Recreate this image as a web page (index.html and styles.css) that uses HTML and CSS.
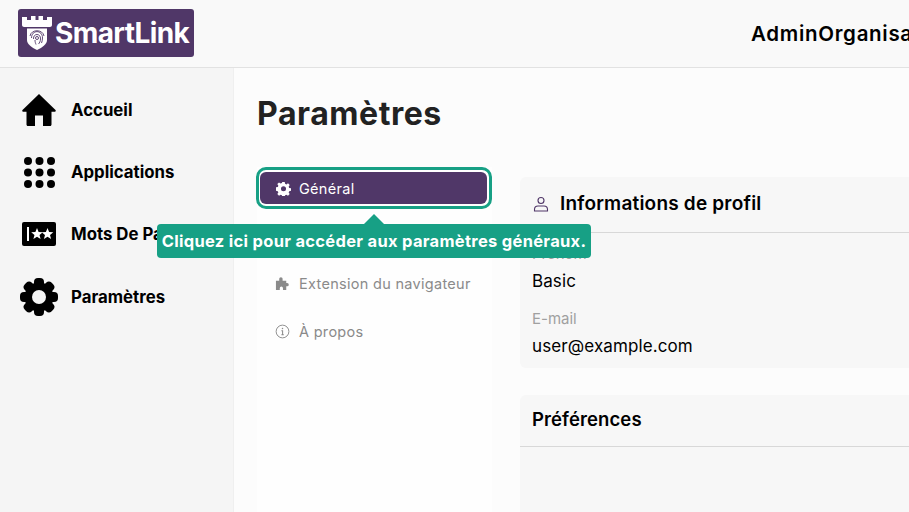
FILE: index.html
```html
<!DOCTYPE html>
<html lang="fr">
<head>
<meta charset="utf-8">
<title>SmartLink - Paramètres</title>
<link rel="stylesheet" href="styles.css">
</head>
<body>
<header class="topbar">
  <div class="logo">
    <svg class="logo-mark" viewBox="0 0 30 34" aria-hidden="true">
      <path fill="#fff" d="M0 1h5v3h4V0h4.500v4h3V0H21v4h4V1h5v8c0 1-1 2-2 2H2c-1 0-2-1-2-2z"/>
      <path fill="#fff" d="M5 12.500h20V24c0 4-4.500 7.500-10 10C9.500 31.500 5 28 5 24z"/>
      <g fill="none" stroke="#503768" stroke-width=".9">
        <circle cx="15" cy="22" r="1.500"/>
        <path d="M11.500 23c-.5-6 7.500-6 7 0 0 2-1 4-2 5M9.500 22c0-8.500 11-8.500 11 0 0 2-.5 3.500-1 5M13 24c0 2 .5 3 1 4.500M8 20c1-7 13-7 14 0"/>
      </g>
    </svg>
    <span class="logo-text">SmartLink</span>
  </div>
  <div class="account">AdminOrganisation</div>
</header>
<div class="shell">
  <nav class="sidebar">
    <a class="side-item">
      <svg class="side-icon" viewBox="0 0 34 34" aria-hidden="true"><path d="M17 1 .5 17c-.6.8 0 1.700 1 1.700h3V31.500c0 .8.600 1.500 1.300 1.500H13V22.500h8V33h7.200c.7 0 1.300-.7 1.300-1.500V18.700h3c1 0 1.600-.9 1-1.700z"/></svg>
      <span>Accueil</span>
    </a>
    <a class="side-item">
      <svg class="side-icon" viewBox="0 0 34 34" aria-hidden="true"><circle cx="6" cy="6" r="4"/><circle cx="17.500" cy="6" r="4"/><circle cx="29" cy="6" r="4"/><circle cx="6" cy="17.500" r="4"/><circle cx="17.500" cy="17.500" r="4"/><circle cx="29" cy="17.500" r="4"/><circle cx="6" cy="29" r="4"/><circle cx="17.500" cy="29" r="4"/><circle cx="29" cy="29" r="4"/></svg>
      <span>Applications</span>
    </a>
    <a class="side-item">
      <svg class="side-icon" viewBox="0 0 34 34" aria-hidden="true"><rect x="0" y="5" width="34" height="24" rx="2"/><rect x="5" y="10" width="2" height="14" fill="#fff"/><path fill="#fff" d="m15 11 1.600 4 4.200.2-3.300 2.700 1.100 4.100-3.600-2.300-3.600 2.300 1.100-4.100-3.300-2.700 4.200-.2zM25.500 11l1.600 4 4.200.2-3.300 2.700 1.100 4.100-3.600-2.300-3.600 2.300 1.100-4.100-3.300-2.700 4.200-.2z"/></svg>
      <span>Mots De Passe</span>
    </a>
    <a class="side-item">
      <svg class="side-icon gear" viewBox="0 0 38 38" aria-hidden="true"><circle cx="19" cy="19" r="14.500"/><rect x="14" y="0" width="10" height="38" rx="4"/><rect x="14" y="0" width="10" height="38" rx="4" transform="rotate(45 19 19)"/><rect x="14" y="0" width="10" height="38" rx="4" transform="rotate(90 19 19)"/><rect x="14" y="0" width="10" height="38" rx="4" transform="rotate(135 19 19)"/><circle class="gear-hole" cx="19" cy="19" r="7"/></svg>
      <span>Paramètres</span>
    </a>
  </nav>
  <main class="content">
    <h1 class="page-title">Paramètres</h1>
    <div class="columns">
      <div class="settings-nav">
        <div class="nav-highlight">
          <a class="nav-item active">
            <svg class="nav-icon" viewBox="0 0 16 16" aria-hidden="true"><path fill="#fff" fill-rule="evenodd" d="M6.700 1h2.600l.4 2 1.400.6 1.700-1.100 1.800 1.800-1.100 1.700.6 1.400 2 .4v2.600l-2 .4-.6 1.400 1.100 1.700-1.800 1.800-1.700-1.100-1.400.6-.4 2H6.700l-.4-2-1.400-.6-1.700 1.100-1.800-1.800 1.100-1.700-.6-1.400-2-.4V6.800l2-.4.6-1.400-1.100-1.700 1.800-1.800 1.700 1.100 1.400-.6zM8 5.500a2.700 2.700 0 1 0 0 5.400 2.700 2.700 0 0 0 0-5.400z"/></svg>
            <span>Général</span>
          </a>
        </div>
        <a class="nav-item">
          <svg class="nav-icon" viewBox="0 0 16 16" aria-hidden="true"><path fill="#8a8a8a" d="M1 5h3.500V3a1.800 1.800 0 0 1 3.600 0v2H12v2.500h1a1.700 1.700 0 0 1 0 3.400h-1V15H8.500v-2a1.700 1.700 0 0 0-3.400 0v2H1z"/></svg>
          <span>Extension du navigateur</span>
        </a>
        <a class="nav-item">
          <svg class="nav-icon" viewBox="0 0 16 16" aria-hidden="true"><circle cx="8" cy="8" r="6.800" fill="none" stroke="#8a8a8a" stroke-width="1"/><circle cx="8" cy="4.800" r=".8" fill="#8a8a8a"/><path fill="none" stroke="#8a8a8a" stroke-width="1.100" d="M6.800 7.300h1.300v4M6.800 11.500h2.600"/></svg>
          <span>À propos</span>
        </a>
      </div>
      <div class="cards">
        <section class="card profile">
          <h2 class="card-head">
            <svg class="user-icon" viewBox="0 0 16 16" aria-hidden="true"><circle cx="8" cy="4.500" r="3" fill="none" stroke="#503768" stroke-width="1.100"/><path fill="none" stroke="#503768" stroke-width="1.100" d="M1.500 15v-1.500c0-2 1.500-3.500 3.500-3.500h6c2 0 3.500 1.500 3.500 3.500V15z"/></svg>
            Informations de profil
          </h2>
          <div class="card-body">
            <div class="field"><div class="label">Prénom</div><div class="value">Basic</div></div>
            <div class="field"><div class="label">E-mail</div><div class="value">user@example.com</div></div>
          </div>
        </section>
        <section class="card second">
          <h2 class="card-head">Préférences</h2>
        </section>
      </div>
    </div>
  </main>
</div>
<div class="tooltip">
  Cliquez ici pour accéder aux paramètres généraux.
</div>
</body>
</html>
```

FILE: styles.css
```css
* { box-sizing: border-box; }
html, body { margin: 0; height: 100%; overflow: hidden; }
body {
  width: 909px;
  height: 512px;
  font-family: "Inter", "Noto Sans", sans-serif;
  color: #000;
  background: #fcfcfc;
  position: relative;
  overflow: hidden;
}
.topbar {
  height: 68px;
  display: flex;
  align-items: flex-start;
  background: #f9f9f9;
  border-bottom: 1px solid #e2e2e2;
  padding: 9px 0 0 18px;
  white-space: nowrap;
  overflow: hidden;
}
.logo {
  width: 176px;
  height: 48px;
  background: #503768;
  border-radius: 3px;
  display: flex;
  align-items: center;
  gap: 3px;
  padding-left: 4px;
  flex: none;
}
.logo-mark { width: 30px; height: 34px; flex: none; }
.logo-text {
  font-size: 28px;
  font-weight: 700;
  color: #fff;
  letter-spacing: -.6px;
}
.account {
  margin-left: 557px;
  margin-top: 12px;
  font-size: 20.500px;
  font-weight: 600;
  letter-spacing: .7px;
}
.shell { display: flex; height: 444px; overflow: hidden; }
.sidebar {
  width: 234px;
  flex: none;
  background: #f5f5f5;
  border-right: 1px solid #efefef;
  padding-top: 24px;
  display: flex;
  flex-direction: column;
  gap: 26px;
}
.side-item {
  display: flex;
  align-items: center;
  height: 36px;
  padding-left: 22px;
  gap: 15px;
  font-size: 16.800px;
  font-weight: 700;
  white-space: nowrap;
  overflow: hidden;
}
.side-item:last-child { height: 38px; }
.side-icon { width: 34px; height: 34px; flex: none; }
.gear { width: 38px; height: 38px; margin: 0 -2px; }
.gear-hole { fill: #f5f5f5; }
.content { flex: 1; padding: 0 0 0 23px; min-width: 0; overflow: hidden; }
.page-title {
  margin: 27px 0 0;
  font-size: 32px;
  line-height: 38px;
  font-weight: 700;
  letter-spacing: .55px;
  color: #222;
}
.columns { display: flex; gap: 28px; margin-top: 34px; height: 345px; padding-left: 1px; margin-left: -1px; }
.settings-nav {
  width: 235px;
  height: 345px;
  flex: none;
  background: #fefefe;
  display: flex;
  flex-direction: column;
}
.nav-highlight {
  margin: 0 0 0 -1px;
  width: 236px;
  height: 42px;
  flex: none;
  border: 3px solid #17a085;
  border-radius: 10px;
  background: #fff;
  padding: 2px 2px 0 1px;
}
.nav-item {
  display: flex;
  align-items: center;
  flex: none;
  height: 32px;
  padding-left: 18px;
  margin-top: 16px;
  gap: 9px;
  font-size: 14.500px;
  color: #8a8a8a;
  white-space: nowrap;
  letter-spacing: .3px;
}
.nav-highlight + .nav-item { margin-top: 58px; }
.nav-item.active {
  margin-top: 0;
  width: 100%;
  padding-left: 16px;
  gap: 8px;
  background: #503768;
  color: #fff;
  border-radius: 6px;
}
.nav-icon { width: 15px; height: 15px; flex: none; }
.cards { flex: 1; min-width: 0; display: flex; flex-direction: column; gap: 27px; margin-top: 10px; }
.card { background: #f7f7f7; border-radius: 6px 0 0 6px; width: 420px; flex: none; }
.profile { height: 191px; }
.card-head {
  margin: 0;
  height: 56px;
  display: flex;
  align-items: center;
  gap: 11px;
  padding: 0 0 2px 13px;
  font-size: 19px;
  letter-spacing: .2px;
  font-weight: 600;
  border-bottom: 1px solid #d8d8d8;
}
.second .card-head {
  height: 52px;
  padding: 0 0 4px 12px;
  font-size: 18.500px;
  letter-spacing: .1px;
}
.user-icon { width: 16px; height: 16px; flex: none; }
.card-body { padding: 11px 12px 0; }
.field + .field { margin-top: 17px; }
.label { font-size: 15px; line-height: 20px; color: #a0a0a0; }
.value { font-size: 17px; line-height: 22px; margin-top: 6px; letter-spacing: .1px; }
.second { height: 130px; }
.tooltip {
  position: absolute;
  left: 157px;
  top: 224px;
  width: 434px;
  height: 34px;
  background: #17a085;
  border-radius: 4px;
  color: #fff;
  font-size: 16.500px;
  letter-spacing: .3px;
  font-weight: 700;
  line-height: 34px;
  text-align: center;
  white-space: nowrap;
}
.tooltip::before {
  content: "";
  position: absolute;
  left: 207px;
  top: -10px;
  border-left: 10px solid transparent;
  border-right: 10px solid transparent;
  border-bottom: 10px solid #17a085;
}
```
